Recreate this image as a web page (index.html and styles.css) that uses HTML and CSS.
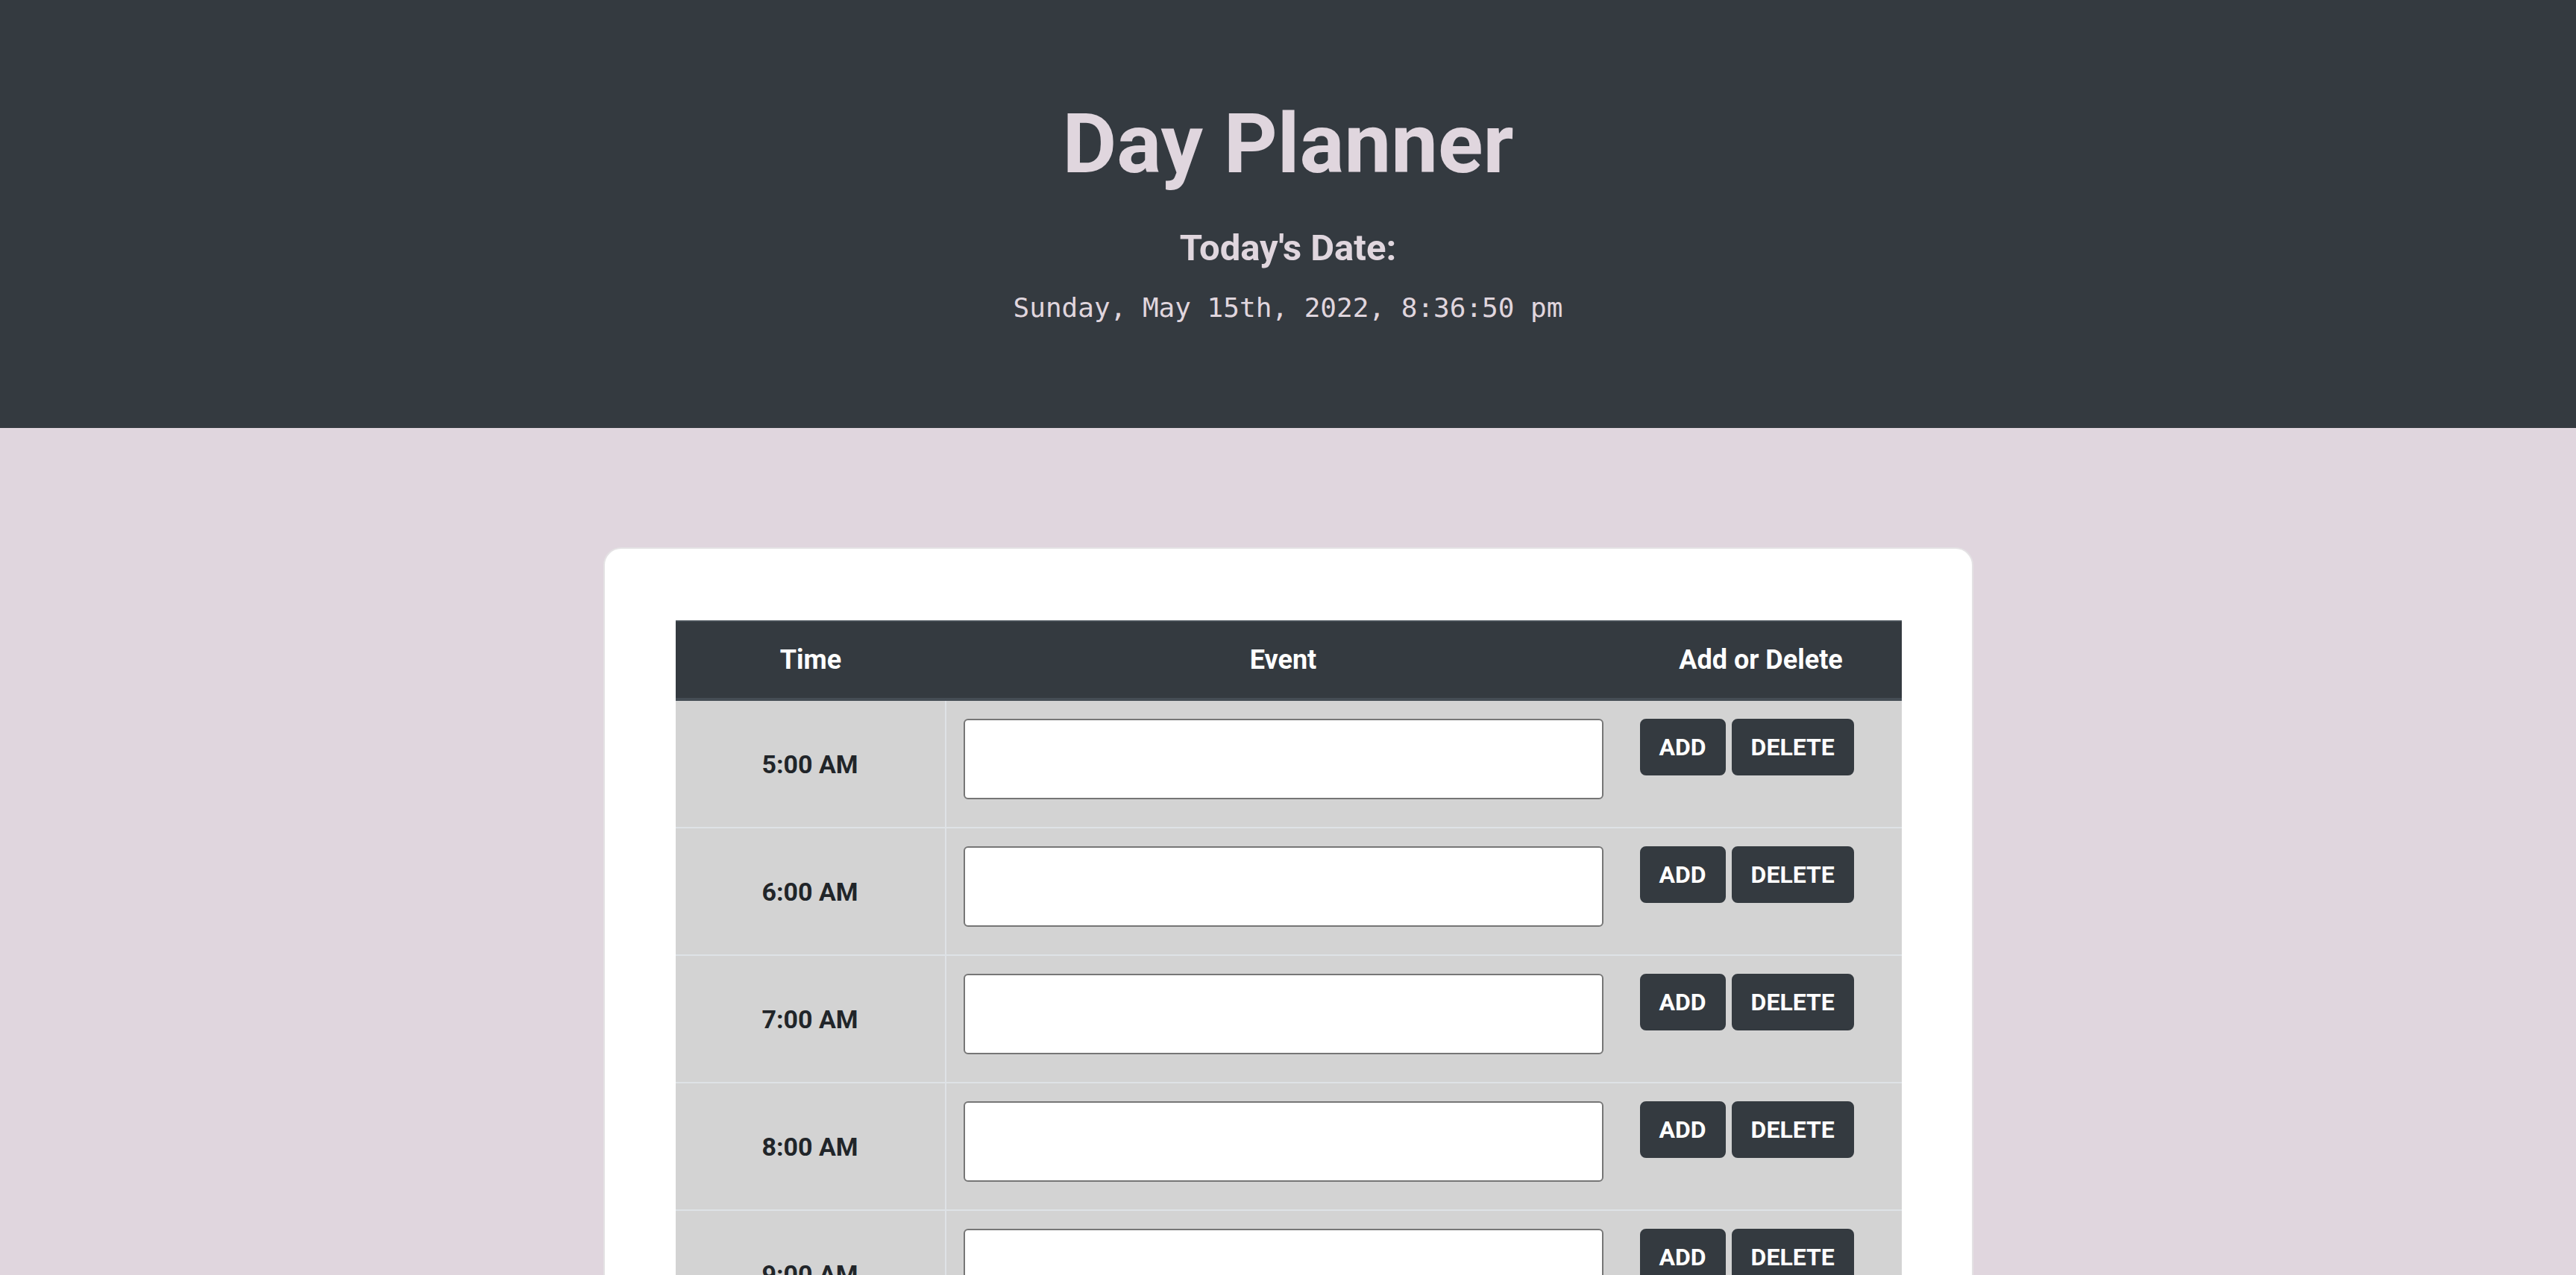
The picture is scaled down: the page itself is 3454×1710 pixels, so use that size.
FILE: index.html
```html
<!DOCTYPE html>
<html lang="en">
<head>
<meta charset="utf-8">
<title>Day Planner</title>
<link rel="stylesheet" href="styles.css">
</head>
<body>
<header class="top">
  <h1 class="title">Day Planner</h1>
  <h2 class="subtitle">Today's Date:</h2>
  <p class="date">Sunday, May 15th, 2022, 8:36:50 pm</p>
</header>
<main class="main">
  <section class="card">
    <table class="planner">
      <colgroup>
        <col class="col-time">
        <col class="col-event">
        <col class="col-actions">
      </colgroup>
      <thead>
        <tr>
          <th>Time</th>
          <th>Event</th>
          <th>Add or Delete</th>
        </tr>
      </thead>
      <tbody>
        <tr>
          <td class="time">5:00 AM</td>
          <td class="event"><input class="event-input" type="text"></td>
          <td class="actions"><div class="btns"><button class="btn">ADD</button><button class="btn">DELETE</button></div></td>
        </tr>
        <tr>
          <td class="time">6:00 AM</td>
          <td class="event"><input class="event-input" type="text"></td>
          <td class="actions"><div class="btns"><button class="btn">ADD</button><button class="btn">DELETE</button></div></td>
        </tr>
        <tr>
          <td class="time">7:00 AM</td>
          <td class="event"><input class="event-input" type="text"></td>
          <td class="actions"><div class="btns"><button class="btn">ADD</button><button class="btn">DELETE</button></div></td>
        </tr>
        <tr>
          <td class="time">8:00 AM</td>
          <td class="event"><input class="event-input" type="text"></td>
          <td class="actions"><div class="btns"><button class="btn">ADD</button><button class="btn">DELETE</button></div></td>
        </tr>
        <tr>
          <td class="time">9:00 AM</td>
          <td class="event"><input class="event-input" type="text"></td>
          <td class="actions"><div class="btns"><button class="btn">ADD</button><button class="btn">DELETE</button></div></td>
        </tr>
        <tr>
          <td class="time">10:00 AM</td>
          <td class="event"><input class="event-input" type="text"></td>
          <td class="actions"><div class="btns"><button class="btn">ADD</button><button class="btn">DELETE</button></div></td>
        </tr>
        <tr>
          <td class="time">11:00 AM</td>
          <td class="event"><input class="event-input" type="text"></td>
          <td class="actions"><div class="btns"><button class="btn">ADD</button><button class="btn">DELETE</button></div></td>
        </tr>
      </tbody>
    </table>
  </section>
</main>
</body>
</html>
```
FILE: styles.css
```css
html, body {
  margin: 0;
  padding: 0;
}
body {
  background: #e0d6de;
  font-family: Roboto, "Liberation Sans", Arial, sans-serif;
  color: #212529;
}
.top {
  background: #343a40;
  height: 574px;
  box-sizing: border-box;
  padding-top: 126px;
  text-align: center;
  color: #e0d6de;
}
.title {
  margin: 0;
  font-size: 112px;
  line-height: 134px;
  font-weight: 700;
}
.subtitle {
  margin: 45px 0 0;
  font-size: 49px;
  line-height: 56px;
  font-weight: 700;
}
.date {
  margin: 29px 0 0;
  font-family: "DejaVu Sans Mono", "Liberation Mono", monospace;
  font-size: 36px;
  line-height: 46px;
}
.main {
  padding-top: 160px;
}
.card {
  width: 1837px;
  box-sizing: border-box;
  margin: 0 auto;
  background: #fff;
  border: 2px solid #e4e2e4;
  border-radius: 24px;
  padding: 96px 95px;
}
.planner {
  width: 1644px;
  table-layout: fixed;
  border-collapse: separate;
  border-spacing: 0;
}
.col-time { width: 363px; }
.col-event { width: 904px; }
.col-actions { width: 377px; }
.planner th {
  background: #343a40;
  color: #fff;
  font-size: 36px;
  line-height: 54px;
  font-weight: 700;
  padding: 24px;
  text-align: center;
  border-top: 2px solid #454d55;
  border-bottom: 4px solid #454d55;
}
.planner td {
  background: #d3d3d3;
  border-bottom: 2px solid #dee2e6;
  vertical-align: top;
}
.planner td.time {
  vertical-align: middle;
  text-align: center;
  font-size: 34px;
  font-weight: 700;
  color: #212529;
  border-right: 2px solid #dee2e6;
  padding: 0 24px;
}
.planner td.event {
  padding: 24px 23px 37px 23px;
}
.event-input {
  display: block;
  width: 100%;
  height: 108px;
  box-sizing: border-box;
  margin: 0;
  background: #fff;
  border: 2px solid #767676;
  border-radius: 6px;
}
.planner td.actions {
  padding: 24px 26px;
}
.btns {
  display: flex;
  gap: 8px;
}
.btn {
  font-family: Roboto, "Liberation Sans", Arial, sans-serif;
  font-size: 32px;
  line-height: 48px;
  font-weight: 700;
  color: #fff;
  background: #343a40;
  border: 2px solid #343a40;
  border-radius: 8px;
  padding: 12px 24px;
  margin: 0;
}
```
